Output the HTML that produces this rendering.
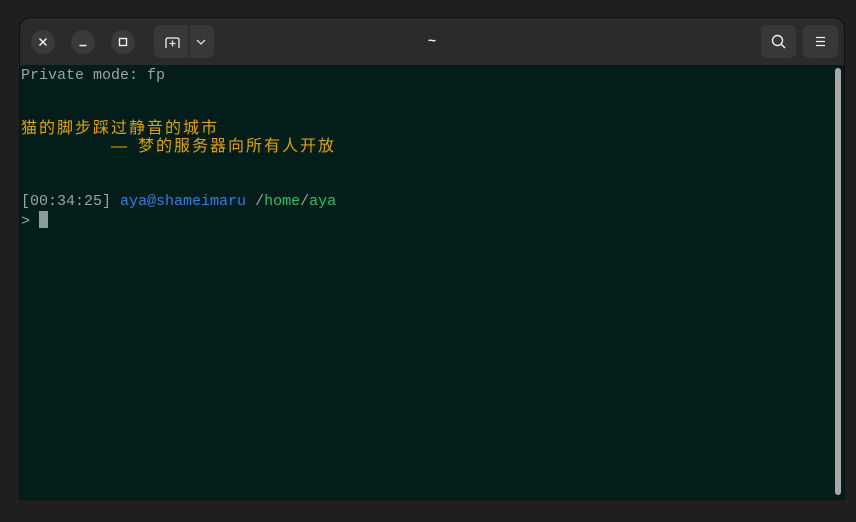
<!DOCTYPE html>
<html><head><meta charset="utf-8"><style>
*{margin:0;padding:0;box-sizing:border-box}
body{width:856px;height:522px;background:#1f1f1f;position:relative;overflow:hidden;font-family:"Liberation Sans",sans-serif}
.win{position:absolute;left:19px;top:17px;width:826px;height:483px;border-radius:12px 12px 0 0;background:#2a2a2a;border:1px solid #111;overflow:hidden}
.hdr{position:absolute;left:0;top:0;width:100%;height:47px;background:#2b2b2b}
.cb{position:absolute;top:12px;width:24px;height:24px;border-radius:50%;background:#3a3a3a}
.btn{position:absolute;background:#383838;border-radius:6px}
.term{position:absolute;left:0;top:47px;width:100%;height:436px;background:#031e1a}
.t{position:absolute;left:1px;font-family:"Liberation Mono",monospace;font-size:15px;line-height:18px;white-space:pre;color:#9aa3a3}
.c{font-family:"Liberation Sans","Noto Sans CJK SC",sans-serif;letter-spacing:2px;font-size:16px}
.y{color:#e0a100}
.sb{position:absolute;left:815px;top:3px;width:6px;height:427px;border-radius:3px;background:#a8a8a8}
.title{position:absolute;left:0;width:100%;top:14px;text-align:center;color:#eee;font-size:14px;font-weight:bold}
</style></head><body>
<div class="win">
 <div class="hdr">
  <div class="cb" style="left:11px"><svg width="24" height="24"><path d="M8.5 8.5l7 7M15.5 8.5l-7 7" stroke="#eee" stroke-width="1.5"/></svg></div>
  <div class="cb" style="left:51px"><svg width="24" height="24"><path d="M8.5 15.5h7" stroke="#eee" stroke-width="1.5"/></svg></div>
  <div class="cb" style="left:91px"><svg width="24" height="24"><rect x="8.5" y="8.5" width="7" height="7" fill="none" stroke="#eee" stroke-width="1.4"/></svg></div>
  <div class="btn" style="left:134px;top:7px;width:60px;height:33px"><svg width="60" height="33"><path d="M12 23v-8q0-2 2-2h9q2 0 2 2v8" fill="none" stroke="#eee" stroke-width="1.3"/><path d="M18.5 15.5v6M15.5 18.5h6" stroke="#eee" stroke-width="1.3"/><path d="M35 0v33" stroke="#222" stroke-width="1"/><path d="M43 15l4 4 4-4" fill="none" stroke="#ddd" stroke-width="1.3"/></svg></div>
  <div class="title">~</div>
  <div class="btn" style="left:741px;top:7px;width:35px;height:33px"><svg width="35" height="33"><circle cx="16.5" cy="15.5" r="5" fill="none" stroke="#eee" stroke-width="1.4"/><path d="M20 19l4 4" stroke="#eee" stroke-width="1.5"/></svg></div>
  <div class="btn" style="left:783px;top:7px;width:35px;height:33px"><svg width="35" height="33"><path d="M13 12.5h9M13 16.5h9M13 20.5h9" stroke="#eee" stroke-width="1.3"/></svg></div>
 </div>
 <div class="term">
  <div class="t" style="top:2px">Private mode: fp</div>
  <div class="t y" style="top:55px"><span class="c">猫的脚步踩过静音的城市</span></div>
  <div class="t y" style="top:73px">          <span class="c">—</span> <span class="c">梦的服务器向所有人开放</span></div>
  <div class="t" style="top:128px">[00:34:25] <span style="color:#2f7fe0">aya@shameimaru</span> /<span style="color:#2dc25a">home</span>/<span style="color:#2dc25a">aya</span></div>
  <div class="t" style="top:146px">&gt; <span style="display:inline-block;width:9px;height:17px;background:#8a9c9c;vertical-align:-3px"></span></div>
  <div class="sb"></div>
 </div>
</div>
</body></html>
